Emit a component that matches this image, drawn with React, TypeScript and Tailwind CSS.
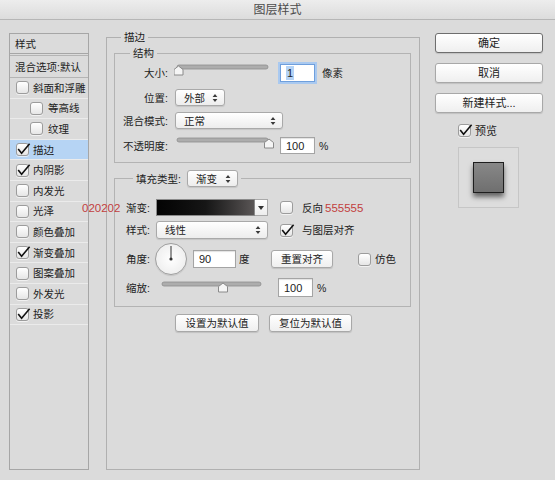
import React from "react";

function Check({ checked = false }: { checked?: boolean }) {
  return (
    <div className="relative w-[13px] h-[13px] shrink-0 rounded-[3px] border border-[#9c9c9c] bg-linear-to-b from-white to-[#e6e6e6] shadow-[0_1px_0_rgba(255,255,255,0.6)]">
      {checked && (
        <svg className="absolute left-0 top-0 overflow-visible" width="13" height="13" viewBox="0 0 13 13">
          <path d="M1.2 5 L4.6 9.2 L12.6 -0.2" fill="none" stroke="#111" strokeWidth="1.6" />
        </svg>
      )}
    </div>
  );
}

function UpDown() {
  return (
    <svg width="6" height="10" viewBox="0 0 6 10">
      <path d="M0.6 4 L3 1 L5.4 4Z M0.6 6 L3 9 L5.4 6Z" fill="#3a3a3a" />
    </svg>
  );
}

function Select({ cls, text }: { cls: string; text: string }) {
  return (
    <div className={`flex items-center justify-between rounded-[3px] border border-[#a9a9a9] bg-linear-to-b from-white to-[#ededed] shadow-[0_1px_1px_rgba(0,0,0,0.1)] pl-[8px] pr-[6px] ${cls}`}>
      <span>{text}</span>
      <UpDown />
    </div>
  );
}

function Input({ cls, children }: { cls: string; children: React.ReactNode }) {
  return (
    <div className={`flex items-center bg-white pl-[5px] text-[11px] text-[#222] ${cls}`}>{children}</div>
  );
}

function Btn({ cls, text }: { cls: string; text: string }) {
  return (
    <div className={`flex items-center justify-center rounded-[3px] bg-linear-to-b from-white to-[#efefef] shadow-[0_1px_1px_rgba(0,0,0,0.12)] ${cls}`}>
      {text}
    </div>
  );
}

function Slider({ w, h, x1, x2, ty, t }: { w: number; h: number; x1: number; x2: number; ty: number; t: number }) {
  return (
    <svg width={w} height={h} viewBox={`0 0 ${w} ${h}`} className="shrink-0">
      <rect x={x1} y={ty} width={x2 - x1} height={4} rx={2} fill="#adadad" stroke="#8e8e8e" strokeWidth="0.8" />
      <path
        d={`M${t} ${ty + 1} L${t + 4.5} ${ty + 4.5} L${t + 4.5} ${ty + 10} L${t - 4.5} ${ty + 10} L${t - 4.5} ${ty + 4.5} Z`}
        fill="#f5f5f5"
        stroke="#8a8a8a"
        strokeWidth="1"
        strokeLinejoin="round"
      />
    </svg>
  );
}

const items: { label: string; checked: boolean; indent?: boolean; active?: boolean }[] = [
  { label: "斜面和浮雕", checked: false },
  { label: "等高线", checked: false, indent: true },
  { label: "纹理", checked: false, indent: true },
  { label: "描边", checked: true, active: true },
  { label: "内阴影", checked: true },
  { label: "内发光", checked: false },
  { label: "光泽", checked: false },
  { label: "颜色叠加", checked: false },
  { label: "渐变叠加", checked: true },
  { label: "图案叠加", checked: false },
  { label: "外发光", checked: false },
  { label: "投影", checked: true },
];

export default function App() {
  return (
    <div className="w-[555px] h-[480px] overflow-hidden bg-[#dbdbdb] text-[10.5px] leading-[14px] text-[#222] font-['Liberation_Sans','Noto_Sans_CJK_SC',sans-serif]">
      <div className="h-[20px] flex items-center justify-center border-b border-[#b6b6b6] bg-linear-to-b from-[#ededed] to-[#dcdcdc] text-[12px] text-[#4b4b4b]">
        图层样式
      </div>
      <div className="flex pl-[9px] pt-[13px]">
        {/* left panel */}
        <div className="w-[80px] h-[437px] border border-[#a6a6a6] flex flex-col shrink-0">
          <div className="h-[20px] border-b border-[#a6a6a6] pl-[5px] flex items-center">样式</div>
          <div className="mt-[1px] h-[23px] border-t border-b border-[#b4b4b4] pl-[5px] flex items-center">混合选项:默认</div>
          {items.map((it) => (
            <div
              key={it.label}
              className={`h-[20.6px] border-b border-[#ebebeb] flex items-center gap-[4px] ${it.indent ? "pl-[20px]" : "pl-[6px]"} ${it.active ? "bg-[#b6d4f4]" : ""}`}
            >
              <Check checked={it.checked} />
              <span className={it.indent ? "ml-[1px]" : ""}>{it.label}</span>
            </div>
          ))}
        </div>

        {/* middle panel */}
        <div className="relative ml-[17px] mt-[4px] w-[314px] h-[433px] shrink-0 border border-[#b0b0b0] pl-[7px] pr-[8px] pt-[15px]">
          <span className="absolute left-[14px] top-[-8px] px-[3px] bg-[#dbdbdb]">描边</span>

          {/* 结构 */}
          <div className="relative h-[110px] border border-[#b3b3b3] pt-[10px]">
            <span className="absolute left-[15px] top-[-8px] px-[3px] bg-[#dbdbdb]">结构</span>
            <div className="flex items-center h-[17px]">
              <div className="w-[53px] text-right">大小:</div>
              <div className="ml-[6px] self-start">
                <Slider w={100} h={17} x1={3} x2={94} ty={1} t={4.5} />
              </div>
              <Input cls="ml-[6px] w-[35px] h-[18px] border border-[#6f9fdc] shadow-[0_0_0_2px_#a9c9f0]">
                <span className="bg-[#b4d3f6] px-[1px]">1</span>
              </Input>
              <span className="ml-[7px]">像素</span>
            </div>
            <div className="flex items-center h-[17px] mt-[8px]">
              <div className="w-[53px] text-right">位置:</div>
              <Select cls="ml-[7px] w-[50px] h-[17px]" text="外部" />
            </div>
            <div className="flex items-center h-[17px] mt-[6px]">
              <div className="w-[53px] text-right">混合模式:</div>
              <Select cls="ml-[7px] w-[108px] h-[17px]" text="正常" />
            </div>
            <div className="flex items-center h-[17px] mt-[8px]">
              <div className="w-[53px] text-right">不透明度:</div>
              <div className="ml-[6px] self-start">
                <Slider w={100} h={17} x1={3} x2={94} ty={1} t={95} />
              </div>
              <Input cls="ml-[6px] w-[35px] h-[17px] border border-[#a4a4a4] shadow-[inset_0_1px_1px_rgba(0,0,0,0.12)]">100</Input>
              <span className="ml-[4px]">%</span>
            </div>
          </div>

          {/* 填充类型 */}
          <div className="relative mt-[15px] h-[129px] border border-[#b3b3b3] pt-[20px] pl-[11px]">
            <div className="absolute left-[18px] top-[-9px] flex items-center px-[3px] bg-[#dbdbdb]">
              <span>填充类型:</span>
              <Select cls="ml-[6px] w-[51px] h-[17px]" text="渐变" />
            </div>
            <div className="relative flex items-center h-[17px]">
              <span className="absolute left-[-44px] text-[11.5px] text-[#c2403e]">020202</span>
              <div className="w-[30px]">渐变:</div>
              <div className="w-[99px] h-[17px] border border-[#8a8a8a] bg-linear-to-r from-[#040404] via-[#161616] to-[#5a5656]" />
              <div className="w-[13px] h-[17px] border border-l-0 border-[#a9a9a9] bg-linear-to-b from-white to-[#ededed] flex items-center justify-center">
                <svg width="6" height="4" viewBox="0 0 6 4">
                  <path d="M0 0 L6 0 L3 4Z" fill="#333" />
                </svg>
              </div>
              <div className="ml-[12px]">
                <Check />
              </div>
              <span className="ml-[9px]">反向</span>
              <span className="ml-[2px] text-[11.5px] text-[#c2403e]">555555</span>
            </div>
            <div className="flex items-center h-[18px] mt-[5px]">
              <div className="w-[30px]">样式:</div>
              <Select cls="w-[112px] h-[18px]" text="线性" />
              <div className="ml-[12px]">
                <Check checked />
              </div>
              <span className="ml-[9px]">与图层对齐</span>
            </div>
            <div className="flex items-center h-[32px] mt-[4px]">
              <div className="w-[29px]">角度:</div>
              <div className="relative w-[32px] h-[32px] rounded-full border border-[#9f9f9f] bg-radial from-white to-[#e9e9e9] shadow-[0_1px_1px_rgba(0,0,0,0.1)]">
                <svg className="absolute left-0 top-0" width="30" height="30" viewBox="0 0 30 30">
                  <line x1="15" y1="15" x2="15" y2="2" stroke="#333" strokeWidth="1" />
                  <circle cx="15" cy="15" r="1.6" fill="#333" />
                </svg>
              </div>
              <Input cls="ml-[6px] w-[43px] h-[18px] border border-[#a4a4a4] shadow-[inset_0_1px_1px_rgba(0,0,0,0.12)]">90</Input>
              <span className="ml-[3px] w-[11px]">度</span>
              <Btn cls="ml-[21px] w-[62px] h-[18px] border border-[#a8a8a8]" text="重置对齐" />
              <div className="ml-[25px]">
                <Check />
              </div>
              <span className="ml-[4px]">仿色</span>
            </div>
            <div className="flex items-center h-[19px] mt-[3px]">
              <div className="w-[30px]">缩放:</div>
              <div className="self-start">
                <Slider w={112} h={19} x1={6} x2={105} ty={4} t={67} />
              </div>
              <Input cls="ml-[10px] w-[35px] h-[19px] border border-[#a4a4a4] shadow-[inset_0_1px_1px_rgba(0,0,0,0.12)]">100</Input>
              <span className="ml-[4px]">%</span>
            </div>
          </div>

          <div className="mt-[7px] flex justify-center gap-[10px] pl-[2px]">
            <Btn cls="w-[84px] h-[18px] border border-[#a8a8a8]" text="设置为默认值" />
            <Btn cls="w-[83px] h-[18px] border border-[#a8a8a8]" text="复位为默认值" />
          </div>
        </div>

        {/* right column */}
        <div className="ml-[15px] w-[108px] flex flex-col shrink-0">
          <Btn cls="h-[20px] border border-[#6e6e6e] text-[11px]" text="确定" />
          <Btn cls="mt-[10px] h-[20px] border border-[#a8a8a8] text-[11px]" text="取消" />
          <Btn cls="mt-[10px] h-[20px] border border-[#a8a8a8] text-[11px]" text="新建样式..." />
          <div className="mt-[11px] pl-[23px] flex items-center h-[13px]">
            <Check checked />
            <span className="ml-[4px] text-[11px]">预览</span>
          </div>
          <div className="mt-[10px] ml-[23px] w-[61px] h-[61px] border border-[#c6c6c6] bg-[#dddddd] p-[14px]">
            <div className="w-[31px] h-[31px] border border-[#1e1e1e] bg-linear-to-b from-[#888888] to-[#6f6f6f] shadow-[0_4px_5px_rgba(0,0,0,0.55)]" />
          </div>
        </div>
      </div>
    </div>
  );
}
